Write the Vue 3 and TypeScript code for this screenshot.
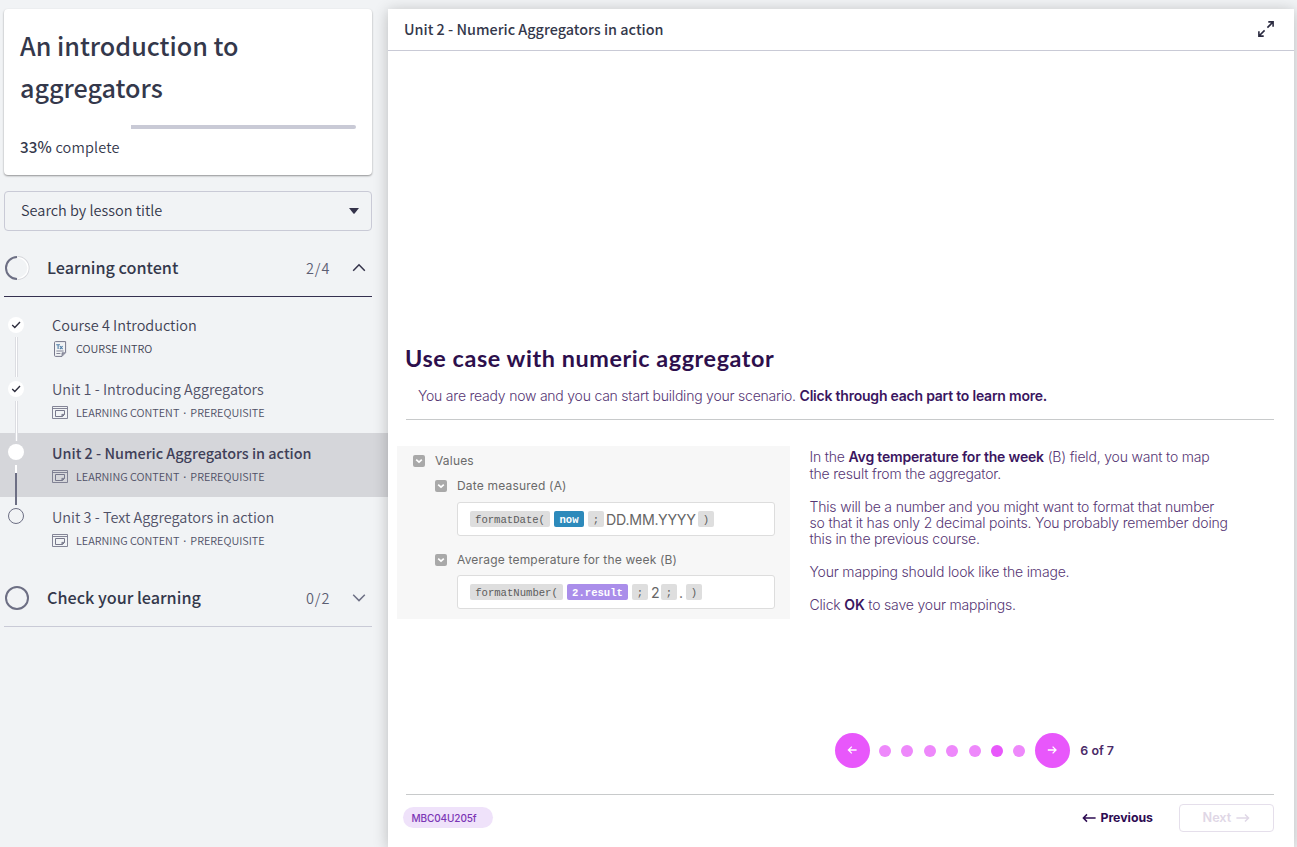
<script setup lang="ts">
interface Lesson {
  title: string
  kind: 'intro' | 'content'
  meta: string[]
  state: 'done' | 'active' | 'todo'
}

const lessons: Lesson[] = [
  { title: 'Course 4 Introduction', kind: 'intro', meta: ['COURSE INTRO'], state: 'done' },
  { title: 'Unit 1 - Introducing Aggregators', kind: 'content', meta: ['LEARNING CONTENT', 'PREREQUISITE'], state: 'done' },
  { title: 'Unit 2 - Numeric Aggregators in action', kind: 'content', meta: ['LEARNING CONTENT', 'PREREQUISITE'], state: 'active' },
  { title: 'Unit 3 - Text Aggregators in action', kind: 'content', meta: ['LEARNING CONTENT', 'PREREQUISITE'], state: 'todo' },
]
const total = 7
const current = 6
</script>

<template>
  <div class="page">
    <aside class="sidebar">
      <section class="card">
        <h1>An introduction to<br />aggregators</h1>
        <div class="track"><div class="track-done"></div><div class="track-rest"></div></div>
        <p class="complete"><strong>33%</strong> complete</p>
      </section>

      <div class="search">
        <span>Search by lesson title</span>
        <svg width="10" height="6" viewBox="0 0 10 6"><path d="M0 0H10L5.6 5.4Q5 6 4.4 5.4Z" fill="#34334a" /></svg>
      </div>

      <div class="group open">
        <svg class="ring" width="26" height="26" viewBox="0 0 26 26" fill="none">
          <path d="M13.6 2A11 11 0 0 1 13.6 24" stroke="#d5d6db" stroke-width="1.8" />
          <path d="M13.6 2.6A10.4 10.4 0 0 1 13.6 23.4" stroke="#fff" stroke-width="1.4" />
          <path d="M13 2A11 11 0 0 0 13 24" stroke="#6d6f84" stroke-width="2" />
        </svg>
        <span class="group-title">Learning content</span>
        <span class="count">2/4</span>
        <svg class="chev" width="14" height="9" viewBox="0 0 14 9"><path d="M1.2 7.8L7 1.8L12.8 7.8" fill="none" stroke="#34334a" stroke-width="1.5" /></svg>
      </div>

      <ul class="lessons">
        <li v-for="l in lessons" :key="l.title" class="lesson" :class="l.state">
          <div class="rail">
            <span class="dot">
              <svg v-if="l.state === 'done'" width="16" height="16" viewBox="0 0 16 16"><path d="M4.2 8L6.8 10.4L12 5" fill="none" stroke="#2c2c3c" stroke-width="1.4" /></svg>
            </span>
            <span v-if="l.state !== 'todo'" class="line"></span>
          </div>
          <div class="info">
            <div class="title">{{ l.title }}</div>
            <div class="meta">
              <svg v-if="l.kind === 'intro'" class="icon" width="16" height="16" viewBox="0 0 16 16" fill="none" stroke="#77788c">
                <path d="M3.5 .6H13.6V11.6L10 15.4H3.5Q2.5 15.4 2.5 14.4V1.6Q2.5 .6 3.5 .6Z" />
                <path d="M10 15.2V11.8H13.4" fill="#9a9bab" stroke-width=".8" />
                <path d="M4.2 3.8H8M6.1 3.8V8M7.9 5.2L10.6 8M10.6 5.2L7.9 8" stroke="#4f7ea8" stroke-width="1.1" />
                <path d="M4.4 10H11.6M4.4 12.5H8.4" stroke-width=".9" />
              </svg>
              <svg v-else class="icon" width="16" height="16" viewBox="0 0 16 16" fill="none" stroke="#77788c">
                <path d="M.5 1.5H15.5V13.5H.5ZM.5 3.5H15.5" stroke-width=".9" />
                <path d="M3.5 5.5H12.5V9.4L10.6 11.5H3.5Z" />
                <path d="M9.8 11.5V9.3H12.5Z" fill="#77788c" stroke-width=".6" />
              </svg>
              <div class="kinds"><template v-for="(m, i) in l.meta" :key="m"><span v-if="i > 0" class="sep">·</span><span>{{ m }}</span></template></div>
            </div>
          </div>
        </li>
      </ul>

      <div class="group closed">
        <svg class="ring" width="26" height="26" viewBox="0 0 26 26"><circle cx="13" cy="13" r="11" fill="none" stroke="#6d6f84" stroke-width="2" /></svg>
        <span class="group-title">Check your learning</span>
        <span class="count">0/2</span>
        <svg class="chev" width="14" height="9" viewBox="0 0 14 9"><path d="M1.2 1.8L7 7.6L12.8 1.8" fill="none" stroke="#6d6f84" stroke-width="1.5" /></svg>
      </div>
    </aside>

    <main class="panel">
      <header class="bar">
        <span class="bar-title">Unit 2 - Numeric Aggregators in action</span>
        <svg width="18" height="18" viewBox="0 0 18 18" fill="none" stroke="#2b2b40" stroke-width="1.6">
          <path d="M10.4 7.6L16 2M11.3 1.9H16.1V6.7M7.6 10.4L2 16M1.9 11.3V16.1H6.7" />
        </svg>
      </header>

      <div class="slide">
        <h2>Use case with numeric aggregator</h2>
        <p class="lead"><span>You are ready now and you can start building your scenario.</span> <b>Click through each part to learn more.</b></p>
        <hr />
        <div class="cols">
          <div class="shot">
            <div class="row r1"><i class="box"><svg width="12" height="12" viewBox="0 0 12 12"><path d="M3.2 4.6L6 7.2L8.8 4.6" fill="none" stroke="#fff" stroke-width="1.7" /></svg></i><span>Values</span></div>
            <div class="row r2"><i class="box"><svg width="12" height="12" viewBox="0 0 12 12"><path d="M3.2 4.6L6 7.2L8.8 4.6" fill="none" stroke="#fff" stroke-width="1.7" /></svg></i><span>Date measured (A)</span></div>
            <div class="field f1">
              <code class="w80">formatDate(</code><code class="w30 blue">now</code><code class="w16">;</code><em class="date">DD.MM.YYYY</em><code class="w16">)</code>
            </div>
            <div class="row r3"><i class="box"><svg width="12" height="12" viewBox="0 0 12 12"><path d="M3.2 4.6L6 7.2L8.8 4.6" fill="none" stroke="#fff" stroke-width="1.7" /></svg></i><span>Average temperature for the week (B)</span></div>
            <div class="field f2">
              <code class="w93">formatNumber(</code><code class="w61 purple">2.result</code><code class="w16">;</code><em class="two">2</em><code class="w16">;</code><em class="point">.</em><code class="w16">)</code>
            </div>
          </div>
          <div class="copy">
            <p>In the <b>Avg temperature for the week</b> (B) field, you want to map<br />the result from the aggregator.</p>
            <p>This will be a number and you might want to format that number<br />so that it has only 2 decimal points. You probably remember doing<br />this in the previous course.</p>
            <p>Your mapping should look like the image.</p>
            <p>Click <b>OK</b> to save your mappings.</p>
          </div>
        </div>

        <nav class="pager">
          <button class="round"><svg width="12" height="10" viewBox="0 0 12 10"><path d="M9.6 5H1.4M4.8 1.6L1.4 5L4.8 8.4" fill="none" stroke="#fff" stroke-width="1.3" /></svg></button>
          <div class="dots"><i v-for="n in total" :key="n" :class="{ on: n === current }"></i></div>
          <button class="round"><svg width="12" height="10" viewBox="0 0 12 10"><path d="M.8 5H9M5.6 1.6L9 5L5.6 8.4" fill="none" stroke="#fff" stroke-width="1.3" /></svg></button>
          <span class="of">{{ current }} of {{ total }}</span>
        </nav>

        <footer>
          <span class="tag">MBC04U205f</span>
          <div class="actions">
            <span class="prev"><svg width="14" height="10" viewBox="0 0 14 10"><path d="M13.6 5H1.4M5 1.4L1.4 5L5 8.6" fill="none" stroke="#2d0b52" stroke-width="1.5" /></svg>Previous</span>
            <span class="next">Next<svg width="14" height="10" viewBox="0 0 14 10"><path d="M.4 5H12.6M9 1.4L12.6 5L9 8.6" fill="none" stroke="#dfd7e6" stroke-width="1.4" /></svg></span>
          </div>
        </footer>
      </div>
    </main>
  </div>
</template>

<style>
body { margin: 0; overflow: hidden; }
</style>

<style scoped>
* { box-sizing: border-box; }
h1, h2, p, ul { margin: 0; padding: 0; font-weight: inherit; }
svg { display: block; flex: none; }
.page { display: flex; width: 1297px; height: 847px; padding-top: 9px; background: #f1f3f5; overflow: hidden; font-family: "Noto Sans CJK SC", "Noto Sans", sans-serif; font-weight: 350; color: #34384b; }
.sidebar { width: 388px; flex: none; }

.card { margin: 0 16px 0 4px; height: 166px; padding: 15px 16px 0; background: #fff; border-radius: 4px; box-shadow: 0 1px 2px rgba(0, 0, 0, .4); }
h1 { font-size: 25.15px; line-height: 42px; font-weight: 500; color: #34384b; white-space: nowrap; }
.track { display: flex; height: 4px; margin-top: 17px; }
.track-done { width: 111px; }
.track-rest { flex: 1; background: #c9cad6; border-radius: 0 2px 2px 0; }
.complete { margin-top: 5px; font-size: 14.5px; letter-spacing: .15px; line-height: 24px; }
.complete strong { font-weight: 500; font-size: 15.2px; }

.search { display: flex; align-items: center; justify-content: space-between; height: 40px; margin: 16px 16px 0 4px; padding: 0 12px 0 16px; border: 1px solid #c9cad6; border-radius: 4px; font-size: 14.5px; }
.search span { padding-bottom: 3px; }

.group { display: flex; align-items: center; height: 58px; margin: 0 16px 0 4px; }
.open { margin-top: 8px; border-bottom: 1px solid #34304f; }
.closed { margin-top: 8px; border-bottom: 1px solid #c9cad6; }
.ring { width: 26px; }
.group-title { flex: 1; margin-left: 17px; padding-bottom: 2px; font-size: 16.2px; font-weight: 500; }
.count { width: 46px; font-size: 14.5px; letter-spacing: .9px; color: #5c5e73; }
.chev { margin-right: 6px; }

.lessons { list-style: none; margin-top: 8px; }
.lesson { display: flex; height: 64px; color: #4f5066; }
.lesson:first-child { color: #3f4254; }
.lesson.active { background: #d5d6da; }
.rail { width: 32px; height: 72px; padding-top: 12px; display: flex; flex-direction: column; align-items: center; position: relative; z-index: 1; }
.dot { width: 16px; height: 16px; border-radius: 50%; background: #fff; }
.todo .rail, .active .rail { padding-top: 11px; }
.todo .dot { background: none; border: 1px solid #6d6f84; }
.line { width: 3px; height: 40px; margin-top: 4px; background: #fff; border: solid #dcdde2; border-width: 0 1px; }
.active .line { border: 0; width: 2px; margin-top: 5px; background: linear-gradient(#fff 0 8px, #6d6f84 8px); }
.info { margin-left: 20px; padding-top: 8px; }
.title { font-size: 14.48px; line-height: 24px; white-space: nowrap; }
.active .title { font-weight: 500; font-size: 14.4px; color: #3f4058; }
.meta { display: flex; align-items: center; gap: 8px; height: 22px; font-size: 10.85px; white-space: nowrap; }
.icon { margin-top: 1px; }
.kinds { display: flex; }
.sep { width: 11px; text-align: center; font-family: "Noto Sans", sans-serif; font-weight: 500; line-height: 17px; }

.panel { width: 906px; flex: none; background: #fff; box-shadow: 0 2px 14px rgba(0, 0, 0, .23); display: flex; flex-direction: column; }
.bar { height: 42px; flex: none; display: flex; align-items: center; justify-content: space-between; padding: 0 19px 1px 16px; border-bottom: 1px solid #c9cad6; }
.bar-title { padding-bottom: 2px; font-size: 14.4px; font-weight: 500; }

.slide { flex: 1; display: flex; flex-direction: column; padding: 292px 20px 0 18px; font-family: Inter, "Liberation Sans", sans-serif; color: #563674; }
h2 { margin-left: -1px; font-family: Lato, sans-serif; font-size: 23.4px; font-weight: 700; line-height: 30px; color: #2d0f4c; white-space: nowrap; letter-spacing: .57px; }
.lead { margin: 12px 0 0 12px; font-size: 14px; line-height: 22px; font-weight: 300; letter-spacing: -.22px; white-space: nowrap; }
b { font-weight: 600; color: #3a1660; }
hr { width: 868px; height: 1px; margin: 12px 0 0; border: 0; background: #c8cacb; }
.cols { display: flex; margin: 26px 0 0 -9px; }
.shot { width: 393px; height: 173px; background: #f7f7f7; color: #6a6a6a; font-size: 12px; font-weight: 400; letter-spacing: .19px; }
.row { display: flex; align-items: center; gap: 10px; height: 20px; white-space: nowrap; }
.row span { padding-bottom: 1px; }
.box { width: 12px; height: 12px; border-radius: 2px; background: #a9a9a9; }
.r1 { margin: 5px 0 0 16px; }
.r2 { margin: 5px 0 0 38px; }
.r3 { margin: 14px 0 0 38px; }
.field { display: flex; align-items: center; width: 318px; height: 34px; margin-left: 60px; padding-left: 12px; border: 1px solid #ddd; border-radius: 3px; background: #fff; white-space: nowrap; }
.f1 { margin-top: 6px; }
.f2 { margin-top: 5px; }
code { display: block; height: 16px; flex: none; border-radius: 2px; background: #dedede; font: 10.6px/18px "Liberation Mono", monospace; letter-spacing: 0; text-align: center; color: #5c5c5c; }
em { flex: none; font-style: normal; font-size: 14.2px; color: #666; letter-spacing: 0; }
.w80 { width: 80px; margin-right: 4px; }
.w93 { width: 93px; margin-right: 4px; }
.w30 { width: 30px; margin-right: 4px; }
.w61 { width: 61px; margin-right: 4px; }
.w16 { width: 16px; }
.blue { background: #2d8abb; color: #fff; font-weight: 700; }
.purple { background: #aa8eea; color: #fff; font-weight: 700; }
.date { width: 94px; padding-left: 2px; letter-spacing: -.2px; }
.two { width: 13px; padding-left: 3px; }
.point { width: 9px; padding-left: 2px; }

.copy { margin: 3.4px 0 0 19.5px; font-size: 14px; line-height: 16.4px; font-weight: 300; letter-spacing: -.18px; white-space: nowrap; }
.copy p + p { margin-top: 16.4px; }

.pager { display: flex; align-items: center; margin: 114px 0 0 429px; height: 34px; }
.round { width: 35px; height: 35px; padding: 0; border: 0; border-radius: 50%; background: #e857fb; display: flex; align-items: center; justify-content: center; }
.dots { display: flex; gap: 10.4px; margin: 2px 10px 0 9px; }
.dots i { width: 12px; height: 12px; border-radius: 50%; background: #ee88fb; }
.dots i.on { background: #e857fb; }
.of { margin-left: 10px; font-size: 12.4px; font-weight: 600; color: #4a2a68; }
footer { width: 868px; margin-top: 27px; height: 46px; border-top: 1px solid #c8cacb; display: flex; align-items: center; justify-content: space-between; }
.tag { width: 90px; height: 21px; margin-left: -3px; padding-left: 8.5px; border-radius: 11px; background: #efe2fa; font-size: 10px; line-height: 22px; font-weight: 500; letter-spacing: -.1px; color: #7b35b5; }
.actions { display: flex; align-items: center; }
.prev { display: flex; align-items: center; gap: 4px; font-size: 12.3px; font-weight: 700; color: #2d0b52; }
.next { display: flex; align-items: center; gap: 5px; width: 95px; height: 28px; margin-left: 26px; padding-left: 22.5px; border: 1px solid #e5dfeb; border-radius: 4px; font-size: 12.7px; font-weight: 600; color: #dfd7e6; }
</style>
